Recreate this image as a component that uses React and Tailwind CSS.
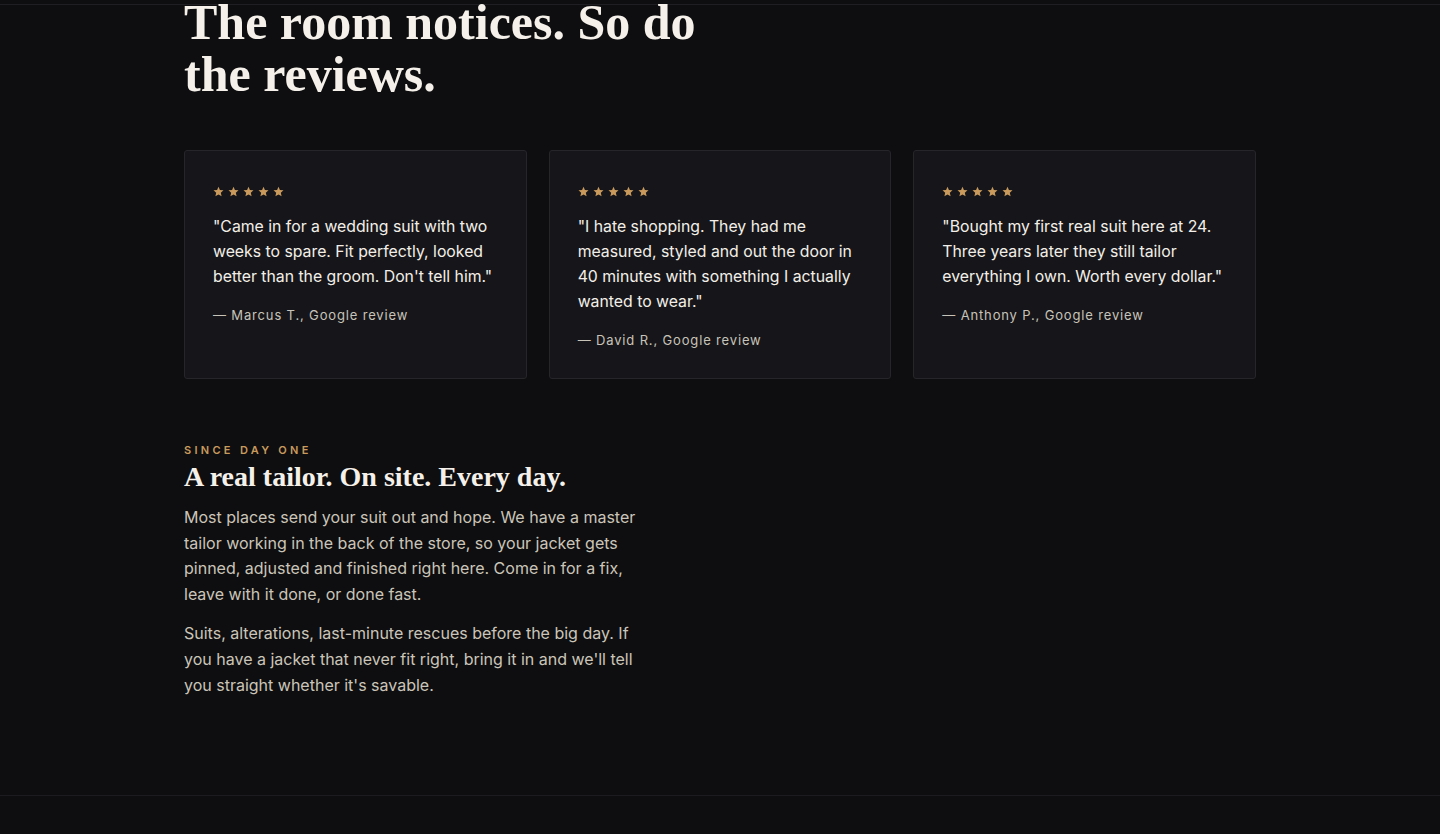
import React from "react";

const reviews = [
  {
    quote: "\"Came in for a wedding suit with two weeks to spare. Fit perfectly, looked better than the groom. Don't tell him.\"",
    author: "— Marcus T., Google review",
  },
  {
    quote: "\"I hate shopping. They had me measured, styled and out the door in 40 minutes with something I actually wanted to wear.\"",
    author: "— David R., Google review",
  },
  {
    quote: "\"Bought my first real suit here at 24. Three years later they still tailor everything I own. Worth every dollar.\"",
    author: "— Anthony P., Google review",
  },
];

const Star = () => (
  <svg width="11" height="11" viewBox="0 0 24 24" className="fill-[#c99a5c]">
    <path d="M12 1.5l3.1 7.2 7.8.7-5.9 5.2 1.8 7.7L12 18.3l-6.8 4 1.8-7.7-5.9-5.2 7.8-.7z" />
  </svg>
);

const ReviewCard = ({ quote, author }) => (
  <div className="bg-[#16161a] border border-[#25252a] rounded-[3px] p-7">
    <div className="flex items-end gap-[4px] h-5 pb-[2px]">
      {[0, 1, 2, 3, 4].map((i) => (
        <Star key={i} />
      ))}
    </div>
    <p className="mt-[15px] text-[15.8px] leading-[25px] text-[#f3efe8]">{quote}</p>
    <p className="mt-4 text-[13px] leading-5 tracking-[0.065em] text-[#c8c3b9]">{author}</p>
  </div>
);

const App = () => {
  return (
    <div className="min-h-screen bg-[#0e0e10] font-['Inter','Noto_Sans',sans-serif] overflow-hidden">
      <div className="h-[5px] border-b border-[#1f1f23]" />

      <section className="max-w-6xl mx-auto px-10 pb-[97px]">
        <h2 className="-mt-[9px] font-['Liberation_Serif','DejaVu_Serif',serif] font-bold text-[50px] leading-[52px] text-[#f5f1ea]">
          The room notices. So do
          <br />
          the reviews.
        </h2>

        <div className="mt-[50px] grid grid-cols-3 gap-[22px]">
          {reviews.map((r) => (
            <ReviewCard key={r.author} {...r} />
          ))}
        </div>

        <div className="mt-[63px]">
          <p className="text-[11px] leading-4 font-semibold tracking-[0.3em] text-[#c99a5c] uppercase">
            Since day one
          </p>
          <h3 className="mt-[1px] font-['Liberation_Serif','DejaVu_Serif',serif] font-bold text-[28px] leading-[36px] text-[#f5f1ea]">
            A real tailor. On site. Every day.
          </h3>
          <div className="max-w-[464px] text-[16px] leading-[25.6px] text-[#cbc5b9]">
            <p className="mt-[10px]">
              Most places send your suit out and hope. We have a master tailor working in the back of the store, so your jacket gets pinned, adjusted and finished right here. Come in for a fix, leave with it done, or done fast.
            </p>
            <p className="mt-[14px]">
              Suits, alterations, last-minute rescues before the big day. If you have a jacket that never fit right, bring it in and we'll tell you straight whether it's savable.
            </p>
          </div>
        </div>
      </section>

      <div className="border-t border-[#1c1c20] h-[60px]" />
    </div>
  );
};

export default App;
